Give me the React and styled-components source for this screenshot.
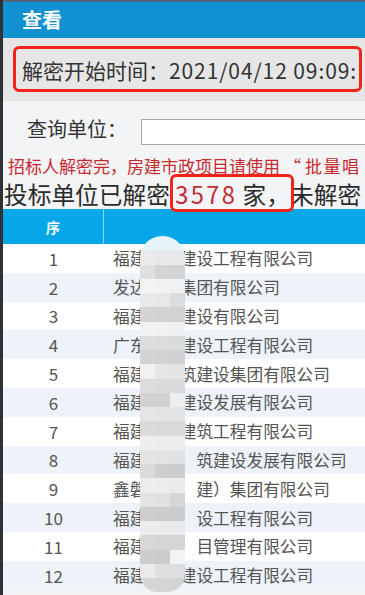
import React from 'react';
import styled, { createGlobalStyle } from 'styled-components';

const GlobalStyle = createGlobalStyle`
  html, body {
    margin: 0;
    padding: 0;
    background: #2e3236;
  }
  body {
    font-family: "Noto Sans CJK SC", "Noto Sans", sans-serif;
  }
`;

const Page = styled.div`
  position: relative;
  width: 362px;
  height: 595px;
  overflow: hidden;
  border-left: 3px solid #2e3236;
  background: #f2f4f6;
`;

const TitleBar = styled.div`
  height: 36px;
  border-top: 2px solid #4d6474;
  background: #1190d2;
  color: #fff;
  font-size: 20px;
  font-weight: 700;
  line-height: 36px;
  padding-left: 19px;
`;

const TimePanel = styled.div`
  background: #e6e6e6;
  padding: 8px 0 9px 10px;
`;

const RedBox = styled.div`
  box-sizing: border-box;
  width: 349px;
  height: 46px;
  border: 3px solid #f4221b;
  border-radius: 6px;
  padding: 3px 0 0 6px;
  overflow: hidden;
  white-space: nowrap;
  font-size: 21px;
  line-height: 37px;
  color: #333;
`;

const Latin = styled.span`
  letter-spacing: 0.9px;
`;

const QueryRow = styled.div`
  display: flex;
  align-items: flex-start;
  height: 34px;
  padding: 18px 0 0 24px;
  gap: 14px;
`;

const Label = styled.span`
  font-size: 20px;
  line-height: 26px;
  color: #333;
  white-space: nowrap;
  margin-top: -3px;
`;

const Input = styled.div`
  flex: 1;
  height: 24px;
  border: 1px solid #a6a6a6;
  border-right: none;
  background: #fff;
`;

const Notice = styled.div`
  height: 26px;
  line-height: 26px;
  padding-left: 5px;
  font-size: 17px;
  color: #c8282d;
  white-space: nowrap;
`;

const Quote = styled.span`
  display: inline-block;
  width: 25px;
  text-align: center;
`;

const Wide = styled.span`
  letter-spacing: 1.5px;
`;

const Summary = styled.div`
  height: 30px;
  line-height: 30px;
  padding-left: 1px;
  font-size: 23.7px;
  color: #2b2b2b;
  white-space: nowrap;
`;

const Mark = styled.span`
  position: relative;
  &::after {
    content: '';
    position: absolute;
    left: -5px;
    right: -4px;
    top: -3px;
    bottom: -1px;
    border: 3px solid #f4221b;
    border-radius: 6px;
  }
`;

const Count = styled.span`
  color: #c52a35;
  letter-spacing: 2.4px;
`;

const HeadRow = styled.div`
  display: grid;
  grid-template-columns: 101px 1fr;
  height: 35px;
  background: #05a7e9;
  color: #fff;
  font-size: 14px;
  font-weight: 700;
`;

const HeadCell = styled.div`
  display: flex;
  align-items: center;
  justify-content: center;
  border-right: ${p => (p.$divider ? '1px solid #8fd6f5' : 'none')};
`;

const Row = styled.div`
  display: grid;
  grid-template-columns: 101px 1fr;
  height: 28.8px;
  align-items: center;
  background: ${p => (p.$odd ? '#fff' : '#edf3f9')};
  color: #555;
  white-space: nowrap;
`;

const Num = styled.div`
  text-align: center;
  font-size: 17px;
`;

const Name = styled.div`
  padding-left: 9px;
  font-size: 16.7px;
`;

const Hidden = styled.span`
  visibility: hidden;
`;

const Mosaic = styled.div`
  position: absolute;
  left: 137px;
  top: 236px;
  width: 45px;
  height: 356px;
  display: grid;
  grid-template-columns: repeat(3, 15px);
  grid-auto-rows: 14.25px;
  border-radius: 22px 22px 18px 18px;
  overflow: hidden;
`;

const Cell = styled.div`
  background: ${p => p.$c};
`;

const companies = [
  ['福建', 2, '建设工程有限公司'],
  ['发达', 2, '集团有限公司'],
  ['福建', 2, '建设有限公司'],
  ['广东', 2, '建设工程有限公司'],
  ['福建', 2, '筑建设集团有限公司'],
  ['福建', 2, '建设发展有限公司'],
  ['福建', 2, '建筑工程有限公司'],
  ['福建', 3, '筑建设发展有限公司'],
  ['鑫磐', 3, '建）集团有限公司'],
  ['福建', 3, '设工程有限公司'],
  ['福建', 3, '目管理有限公司'],
  ['福建', 2, '建设工程有限公司'],
];

// pseudo-random grey tiles for the pixelated blur
const tiles = Array.from({ length: 75 }, (_, i) => {
  if (i < 3) return '#e6f3fb';
  const v = (i * 37 + (i % 7) * 53 + (i % 3) * 29) % 40;
  const g = 202 + v;
  return `rgb(${g}, ${g + 2}, ${g + 4})`;
});

export default function App() {
  return (
    <Page>
      <GlobalStyle />
      <TitleBar>查看</TitleBar>

      <TimePanel>
        <RedBox>
          解密开始时间：<Latin>2021/04/12 09:09:</Latin>
        </RedBox>
      </TimePanel>

      <QueryRow>
        <Label>查询单位：</Label>
        <Input />
      </QueryRow>

      <Notice>
        招标人解密完，房建市政项目请使用<Quote>“</Quote><Wide>批量唱</Wide>
      </Notice>
      <Summary>
        投标单位已解密 <Mark><Count>3578</Count> 家，</Mark>未解密
      </Summary>

      <HeadRow>
        <HeadCell $divider>序</HeadCell>
        <HeadCell />
      </HeadRow>

      {companies.map(([pre, hidden, post], i) => (
        <Row key={i} $odd={i % 2 === 0}>
          <Num>{i + 1}</Num>
          <Name>
            {pre}
            <Hidden>{'　'.repeat(hidden)}</Hidden>
            {post}
          </Name>
        </Row>
      ))}

      <Mosaic>
        {tiles.map((c, i) => (
          <Cell key={i} $c={c} />
        ))}
      </Mosaic>
    </Page>
  );
}
